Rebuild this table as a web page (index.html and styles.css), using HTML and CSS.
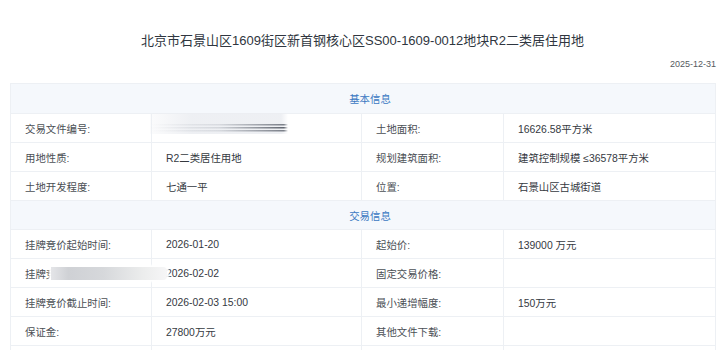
FILE: index.html
```html
<!DOCTYPE html>
<html lang="zh-CN">
<head>
<meta charset="utf-8">
<title>地块详情</title>
<link rel="stylesheet" href="styles.css">
</head>
<body>
<div class="page">
  <h1 class="title">北京市石景山区1609街区新首钢核心区SS00-1609-0012地块R2二类居住用地</h1>
  <div class="date">2025-12-31</div>
  <table class="info">
    <colgroup>
      <col class="c1"><col class="c2"><col class="c3"><col class="c4">
    </colgroup>
    <tr><th colspan="4" class="sec first">基本信息</th></tr>
    <tr>
      <td class="lbl">交易文件编号:</td>
      <td class="val rel"><span class="blur-a"></span></td>
      <td class="lbl">土地面积:</td>
      <td class="val">16626.58平方米</td>
    </tr>
    <tr>
      <td class="lbl">用地性质:</td>
      <td class="val">R2二类居住用地</td>
      <td class="lbl">规划建筑面积:</td>
      <td class="val">建筑控制规模 ≤36578平方米</td>
    </tr>
    <tr>
      <td class="lbl">土地开发程度:</td>
      <td class="val">七通一平</td>
      <td class="lbl">位置:</td>
      <td class="val">石景山区古城街道</td>
    </tr>
    <tr><th colspan="4" class="sec">交易信息</th></tr>
    <tr>
      <td class="lbl">挂牌竞价起始时间:</td>
      <td class="val">2026-01-20</td>
      <td class="lbl">起始价:</td>
      <td class="val">139000 万元</td>
    </tr>
    <tr>
      <td class="lbl rel">挂牌竞价结束时间:<span class="blur-b"></span></td>
      <td class="val">2026-02-02</td>
      <td class="lbl">固定交易价格:</td>
      <td class="val"></td>
    </tr>
    <tr>
      <td class="lbl">挂牌竞价截止时间:</td>
      <td class="val">2026-02-03 15:00</td>
      <td class="lbl">最小递增幅度:</td>
      <td class="val">150万元</td>
    </tr>
    <tr>
      <td class="lbl">保证金:</td>
      <td class="val">27800万元</td>
      <td class="lbl">其他文件下载:</td>
      <td class="val"></td>
    </tr>
    <tr>
      <td class="lbl">&nbsp;</td>
      <td class="val"></td>
      <td class="lbl"></td>
      <td class="val"></td>
    </tr>
  </table>
</div>
</body>
</html>
```
FILE: styles.css
```css
html, body {
  margin: 0;
  padding: 0;
  background: #ffffff;
}
body {
  font-family: "Liberation Sans", "Noto Sans CJK SC", sans-serif;
  color: #333333;
}
.page {
  padding: 0 5px 0 10px;
}
.title {
  margin: 31px 0 0 0;
  font-size: 13px;
  line-height: 20px;
  font-weight: normal;
  text-align: center;
  color: #2f3640;
}
.date {
  margin-top: 7px;
  margin-right: -1px;
  font-size: 9px;
  line-height: 12px;
  text-align: right;
  color: #555a60;
}
.info {
  margin-top: 13px;
  width: 705px;
  border-collapse: collapse;
  table-layout: fixed;
  border: 1px solid #edf0f4;
  font-size: 10.4px;
}
.c1 { width: 141px; }
.c2 { width: 210px; }
.c3 { width: 142px; }
.c4 { width: 212px; }
.info th,
.info td {
  border: 1px solid #edf0f4;
  height: 29px;
  padding: 0 0 0 14px;
  box-sizing: border-box;
  text-align: left;
  vertical-align: middle;
  white-space: nowrap;
}
.info th.sec {
  height: 29px;
  background: #f5f8fc;
  color: #3b78c2;
  font-weight: normal;
  font-size: 10.4px;
  text-align: center;
  padding-left: 14px;
}
.info th.sec.first {
  height: 30px;
}
.lbl {
  color: #4b4f55;
}
.val {
  color: #35393f;
}
.rel {
  position: relative;
}
.blur-a {
  position: absolute;
  left: -2px;
  top: -1px;
  width: 138px;
  height: 21px;
  background:
    linear-gradient(to right, rgba(150,155,165,0) 0%, rgba(150,155,165,0.25) 50%, rgba(110,115,125,0.9) 97%, rgba(110,115,125,0) 100%) 0 11px / 100% 1.5px no-repeat,
    linear-gradient(to right, rgba(150,155,165,0) 0%, rgba(150,155,165,0.3) 50%, rgba(90,95,105,0.95) 97%, rgba(90,95,105,0) 100%) 0 14px / 100% 1.5px no-repeat,
    linear-gradient(to right, rgba(150,155,165,0) 0%, rgba(150,155,165,0.25) 50%, rgba(110,115,125,0.9) 97%, rgba(110,115,125,0) 100%) 0 17px / 100% 1.5px no-repeat,
    linear-gradient(to right, rgba(236,238,242,0.2), rgba(236,238,242,0.9) 30%, rgba(236,238,242,0.9) 95%, rgba(236,238,242,0));
}
.blur-b {
  position: absolute;
  left: 40px;
  top: 8px;
  width: 116px;
  height: 13px;
  border-radius: 0 4px 4px 0;
  background: linear-gradient(to right, #e4e5e8 0%, #cfd1d5 15%, #d6d8db 45%, #eceded 80%, #f6f6f7 100%);
  box-shadow: 0 0 2px 2px #ffffff;
}
```
